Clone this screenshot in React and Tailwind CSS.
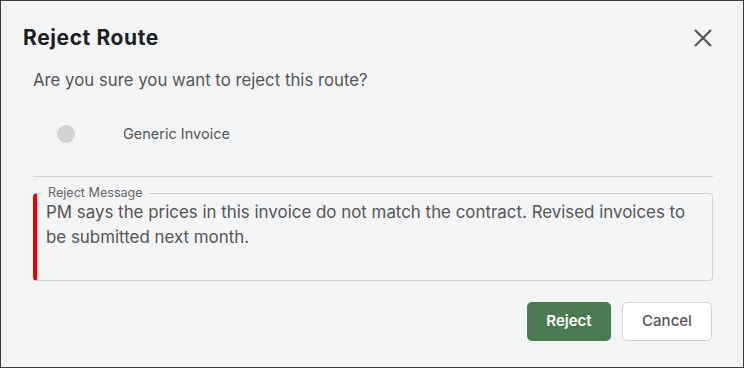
const RejectRouteDialog = () => {
  return (
    <div
      className="w-[744px] h-[368px] border border-[#3a3a3a] bg-[#f3f4f6] overflow-hidden"
      style={{ fontFamily: 'Inter, "Liberation Sans", sans-serif' }}
    >
      <div className="flex items-center justify-between pt-[23px] pl-[22px] pr-[31px]">
        <h2 className="text-[21px] leading-7 font-bold text-[#1f1f1f] tracking-[0.6px]">Reject Route</h2>
        <button className="w-[18px] h-[18px] text-[#555]" aria-label="Close">
          <svg viewBox="0 0 18 18" className="w-[18px] h-[18px]" fill="none" stroke="currentColor" strokeWidth="2.2">
            <path d="M1 1 L17 17 M17 1 L1 17" />
          </svg>
        </button>
      </div>

      <div className="pl-[32px] pr-[30px]">
        <p className="mt-4 text-[16.8px] leading-6 text-[#555]">Are you sure you want to reject this route?</p>

        <div className="mt-[30px] h-6 flex items-center">
          <span className="ml-[24px] w-[18px] h-[18px] rounded-full bg-[#d2d2d4]" />
          <span className="ml-[48px] text-[14.5px] text-[#555]">Generic Invoice</span>
        </div>

        <div className="mt-[30px] h-px bg-[#cfcfcf]" />

        <fieldset className="mt-[9px] border border-[#cfcfcf] border-l-[4px] border-l-[#ee0000] rounded-[4px] pl-[5px]">
          <legend className="px-1.5 text-[12.6px] leading-[14px] text-[#666]">Reject Message</legend>
          <div className="h-[80px] pl-[4px] text-[16.9px] leading-[25px] text-[#555] whitespace-nowrap">
            <p>PM says the prices in this invoice do not match the contract. Revised invoices to</p>
            <p>be submitted next month.</p>
          </div>
        </fieldset>

        <div className="mt-[21px] flex justify-end gap-[11px] pr-px">
          <button className="w-[84px] h-[39px] rounded-[5px] bg-[#4a7a51] text-white text-[15px] font-semibold">
            Reject
          </button>
          <button className="w-[90px] h-[39px] rounded-[5px] bg-white border border-[#d0d0d0] text-[#555] text-[15px] font-medium">
            Cancel
          </button>
        </div>
      </div>
    </div>
  );
};

export default function App() {
  return <RejectRouteDialog />;
}
